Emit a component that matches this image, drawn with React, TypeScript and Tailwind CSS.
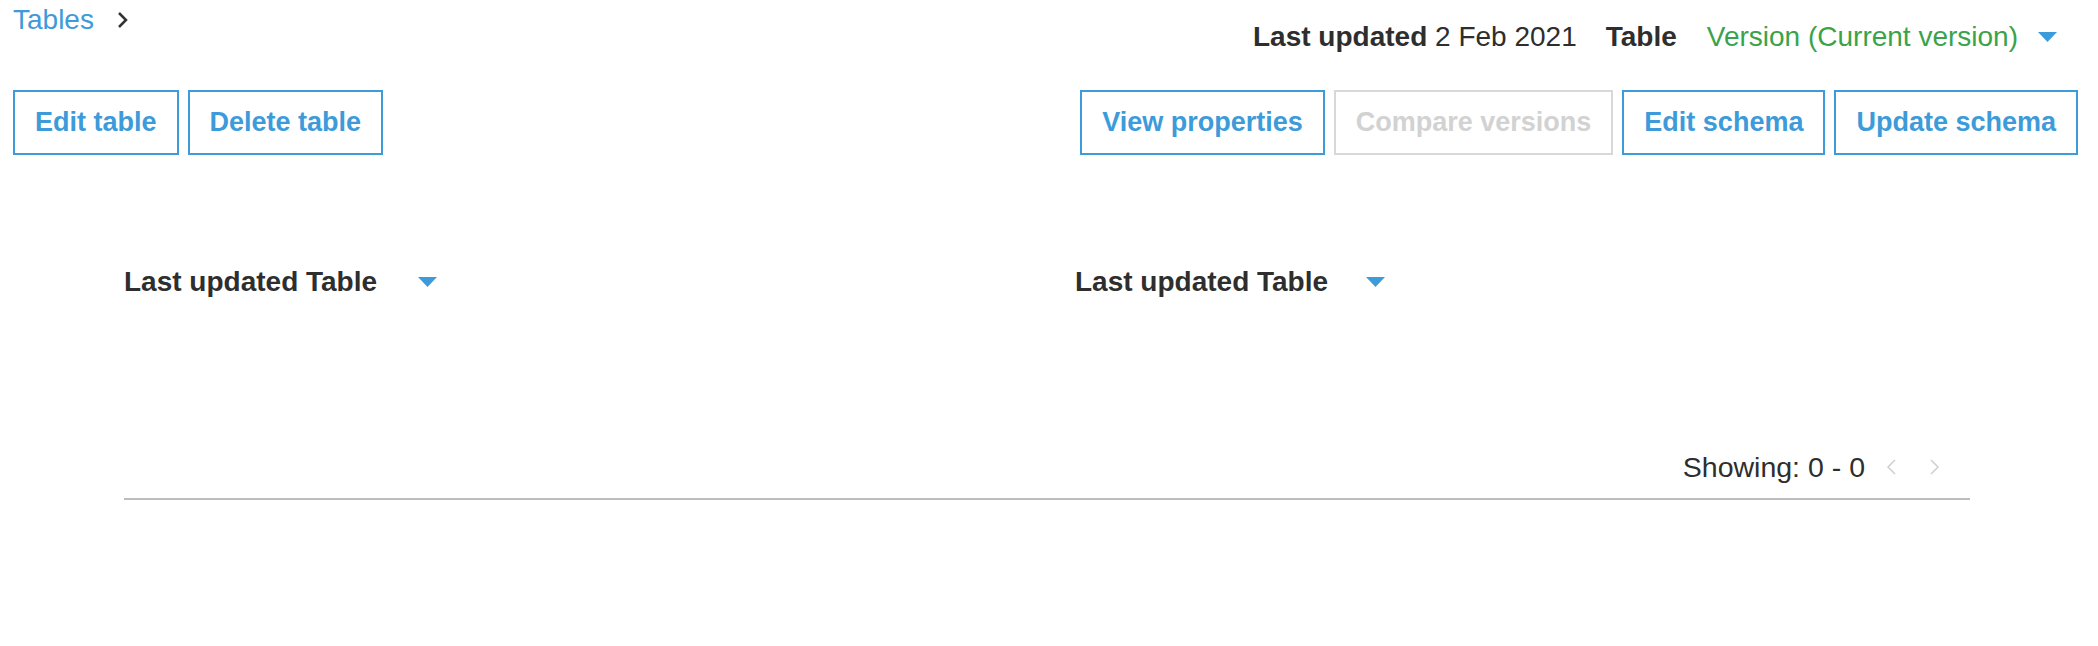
import React from 'react'

const font = { fontFamily: '"Liberation Sans", Arial, sans-serif' }

function Caret({ className = '' }: { className?: string }) {
  return (
    <svg width="19" height="10" viewBox="0 0 19 10" className={className}>
      <polygon points="0,0 19,0 9.5,10" fill="#3d9bd9" />
    </svg>
  )
}

function Chevron({ dir, color, width }: { dir: 'left' | 'right'; color: string; width: number }) {
  const pts = dir === 'right' ? '2,1 9,8 2,15' : '9,1 2,8 9,15'
  return (
    <svg width="11" height="16" viewBox="0 0 11 16">
      <polyline points={pts} fill="none" stroke={color} strokeWidth={width} />
    </svg>
  )
}

function ActionButton({ label, disabled }: { label: string; disabled?: boolean }) {
  return (
    <button
      type="button"
      className={`h-[65px] px-[20px] border-2 font-bold text-[27px] bg-white ${
        disabled ? 'border-[#d8d8d8] text-[#d2d2d2]' : 'border-[#3d9bd9] text-[#3d9bd9]'
      }`}
    >
      {label}
    </button>
  )
}

export default function App() {
  return (
    <div className="w-full h-[646px] bg-white text-[28px] text-[#2e2e2e]" style={font}>
      {/* Breadcrumb + meta */}
      <div className="flex justify-between items-start h-[90px] pl-[13px] pr-[41px]">
        <div className="flex items-center h-[40px]">
          <span className="text-[#3d9bd9] leading-[40px]">Tables</span>
          <span className="ml-[23px] flex items-center">
            <Chevron dir="right" color="#333" width={2.5} />
          </span>
        </div>
        <div className="flex items-center h-[40px] mt-[17px] leading-[40px]">
          <span>
            <b>Last updated</b> 2 Feb 2021
          </span>
          <b className="ml-[29px]">Table</b>
          <span className="ml-[30px] text-[#3aa34a]">Version (Current version)</span>
          <Caret className="ml-[20px]" />
        </div>
      </div>

      {/* Actions */}
      <div className="flex justify-between pl-[13px] pr-[20px]">
        <div className="flex gap-[9px]">
          <ActionButton label="Edit table" />
          <ActionButton label="Delete table" />
        </div>
        <div className="flex gap-[9px]">
          <ActionButton label="View properties" />
          <ActionButton label="Compare versions" disabled />
          <ActionButton label="Edit schema" />
          <ActionButton label="Update schema" />
        </div>
      </div>

      {/* Table */}
      <div className="ml-[124px] w-[1846px] mt-[106px]">
        <div className="grid grid-cols-[951px_1fr] h-[40px]">
          <div className="flex items-center font-bold">
            <span>Last updated Table</span>
            <Caret className="ml-[41px]" />
          </div>
          <div className="flex items-center font-bold">
            <span>Last updated Table</span>
            <Caret className="ml-[38px]" />
          </div>
        </div>
        <div className="flex justify-end items-center h-[40px] mt-[146px] pr-[30px]">
          <span className="text-[28.5px]">Showing: 0 - 0</span>
          <span className="ml-[21px] flex items-center">
            <Chevron dir="left" color="#cfcfcf" width={1.5} />
          </span>
          <span className="ml-[32px] flex items-center">
            <Chevron dir="right" color="#cfcfcf" width={1.5} />
          </span>
        </div>
        <div className="mt-[11px] h-[2px] bg-[#bdbdbd]" />
      </div>
    </div>
  )
}
